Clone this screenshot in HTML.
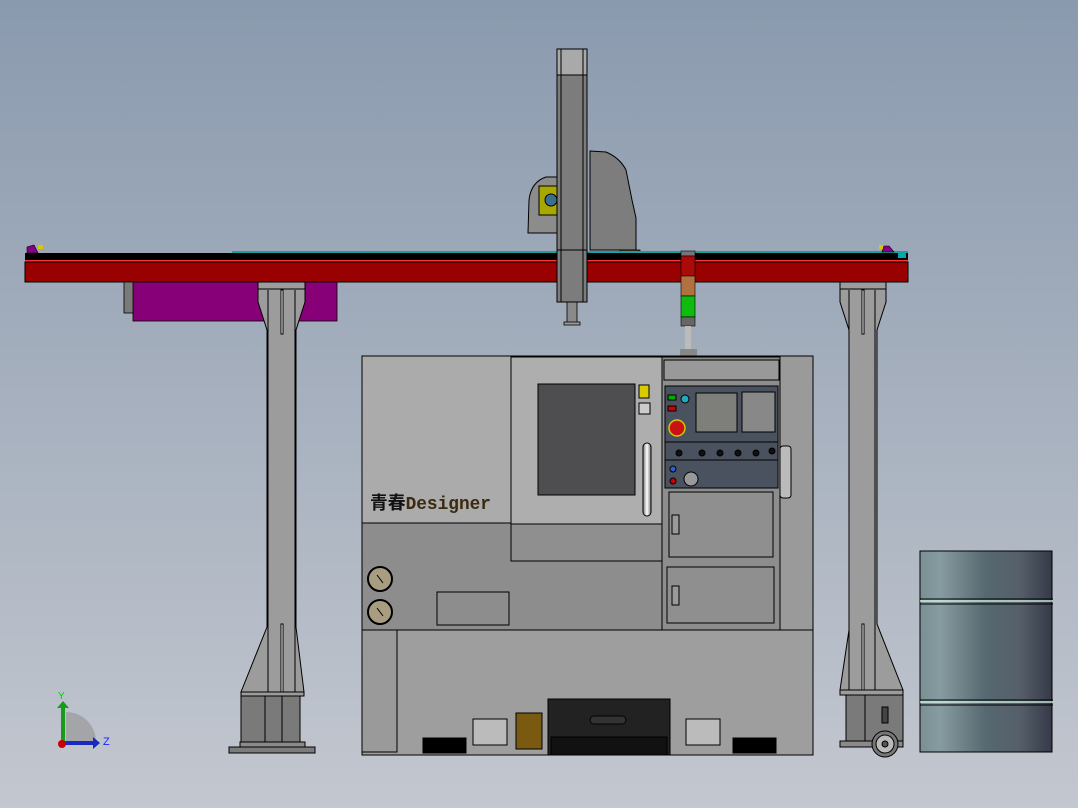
<!DOCTYPE html>
<html><head><meta charset="utf-8"><style>
html,body{margin:0;padding:0;width:1078px;height:808px;overflow:hidden}
svg{display:block}
</style></head><body>
<svg width="1078" height="808" viewBox="0 0 1078 808" xmlns="http://www.w3.org/2000/svg">
<defs>
<linearGradient id="bg" x1="0" y1="0" x2="0" y2="1"><stop offset="0" stop-color="#8a9aae"/><stop offset="1" stop-color="#c3c7cf"/></linearGradient>
<linearGradient id="barrel" x1="0" y1="0" x2="1" y2="0"><stop offset="0" stop-color="#7a8f93"/><stop offset="0.15" stop-color="#879ca0"/><stop offset="0.5" stop-color="#566870"/><stop offset="0.75" stop-color="#555f6a"/><stop offset="1" stop-color="#363a48"/></linearGradient>
<linearGradient id="handle" x1="0" y1="0" x2="1" y2="0"><stop offset="0" stop-color="#777"/><stop offset="0.5" stop-color="#fff"/><stop offset="1" stop-color="#777"/></linearGradient>
</defs>
<rect width="1078" height="808" fill="url(#bg)"/>

<rect x="557" y="49" width="30" height="253" fill="#7c7c7c" stroke="#000" stroke-width="1"/>
<rect x="557" y="49" width="30" height="26" fill="#a9a9a9" stroke="#000"/>
<line x1="561" y1="49" x2="561" y2="302" stroke="#000"/>
<line x1="583" y1="49" x2="583" y2="302" stroke="#000"/>
<rect x="567" y="302" width="10" height="21" fill="#8a8a8a" stroke="#000" stroke-width=".8"/>
<rect x="564" y="322" width="16" height="3" fill="#999" stroke="#000" stroke-width=".8"/>

<path d="M590 151 L606 152 Q620 158 626 170 L632 200 L636 218 L636 250 L590 250 Z" fill="#7d7d7d" stroke="#000"/>
<path d="M557 177 L546 177 Q531 182 529 200 L528 233 L557 233 Z" fill="#8c8c8c" stroke="#000"/>
<rect x="539" y="186" width="18" height="29" fill="#a8a800" stroke="#000"/>
<circle cx="551" cy="200" r="6" fill="#3a6f8f" stroke="#000"/>
<rect x="620" y="250" width="20" height="7" fill="#4a3f1f" stroke="#000" stroke-width=".8"/>

<line x1="232" y1="252" x2="908" y2="252" stroke="#1aa0a0" stroke-width="2"/>
<rect x="25" y="253" width="883" height="7" fill="#000"/>
<rect x="25" y="260" width="883" height="2" fill="#ff3030"/>
<rect x="25" y="262" width="883" height="20" fill="#990000" stroke="#000" stroke-width="1"/>
<path d="M27 253 L27 247 L34 245 L38 253 Z" fill="#880088" stroke="#000" stroke-width=".6"/>
<rect x="38" y="245" width="5" height="4" fill="#d8c800"/>
<path d="M882 252 L884 246 L889 246 L894 252 Z" fill="#880088" stroke="#000" stroke-width=".6"/>
<rect x="879" y="245" width="4" height="4" fill="#d8c800"/>
<rect x="898" y="253" width="8" height="5" fill="#0aa"/>
<rect x="557" y="250" width="30" height="52" fill="#7c7c7c" stroke="#000"/>
<line x1="561" y1="250" x2="561" y2="302" stroke="#000"/>
<line x1="583" y1="250" x2="583" y2="302" stroke="#000"/>

<rect x="124" y="282" width="10" height="31" fill="#7a7a7a" stroke="#000" stroke-width=".8"/>
<rect x="133" y="282" width="204" height="39" fill="#880077" stroke="#000" stroke-width=".8"/>

<g stroke="#000" stroke-width="1">
<path d="M258 282 L305 282 L305 302 L296 330 L296 627 L304 692 L241 692 L267 627 L267 330 L258 302 Z" fill="#9c9c9c"/>
<line x1="268" y1="290" x2="268" y2="692"/><line x1="295" y1="290" x2="295" y2="692"/>
<line x1="258" y1="289" x2="305" y2="289"/>
<rect x="281" y="290" width="2" height="44" fill="#fff"/>
<rect x="281" y="624" width="2" height="68" fill="#fff"/>
<rect x="241" y="692" width="63" height="4" fill="#9c9c9c"/>
<rect x="241" y="696" width="59" height="46" fill="#7a7a7a"/>
<line x1="265" y1="696" x2="265" y2="742"/><line x1="282" y1="696" x2="282" y2="742"/>
<rect x="240" y="742" width="65" height="5" fill="#8a8a8a"/>
<rect x="229" y="747" width="86" height="6" fill="#7c7c7c"/>
</g>

<g stroke="#000" stroke-width="1">
<path d="M840 282 L886 282 L886 302 L877 330 L877 624 L903 690 L840 690 L849 630 L849 330 L840 302 Z" fill="#9c9c9c"/>
<line x1="849" y1="290" x2="849" y2="692"/><line x1="875" y1="290" x2="875" y2="692"/>
<line x1="840" y1="289" x2="886" y2="289"/>
<rect x="862" y="290" width="2" height="44" fill="#fff"/>
<rect x="862" y="624" width="2" height="68" fill="#fff"/>
<rect x="840" y="690" width="63" height="5" fill="#9c9c9c"/>
<rect x="846" y="695" width="57" height="50" fill="#7a7a7a"/>
<line x1="865" y1="695" x2="865" y2="745"/>
<rect x="840" y="741" width="63" height="6" fill="#8a8a8a"/>
<circle cx="885" cy="744" r="13" fill="#777"/>
<circle cx="885" cy="744" r="9" fill="#bbb"/>
<circle cx="885" cy="744" r="3" fill="#555"/>
<rect x="882" y="707" width="6" height="16" fill="#444"/>
</g>

<rect x="920" y="551" width="132" height="201" fill="url(#barrel)" stroke="#000"/>
<line x1="920" y1="599" x2="1053" y2="599" stroke="#000"/><line x1="920" y1="601" x2="1053" y2="601" stroke="#dfe" stroke-width="1.2"/><line x1="920" y1="604" x2="1053" y2="604" stroke="#000"/>
<line x1="920" y1="700" x2="1053" y2="700" stroke="#000"/><line x1="920" y1="702" x2="1053" y2="702" stroke="#dfe" stroke-width="1.2"/><line x1="920" y1="705" x2="1053" y2="705" stroke="#000"/>

<rect x="681" y="251" width="14" height="5" fill="#777" stroke="#000" stroke-width=".6"/>
<rect x="681" y="256" width="14" height="20" fill="#aa0a0a" stroke="#000" stroke-width=".6"/>
<rect x="681" y="276" width="14" height="20" fill="#b07040" stroke="#000" stroke-width=".6"/>
<rect x="681" y="296" width="14" height="21" fill="#10bb10" stroke="#000" stroke-width=".6"/>
<rect x="681" y="317" width="14" height="9" fill="#666" stroke="#000" stroke-width=".6"/>
<rect x="685" y="326" width="6" height="24" fill="#bbb"/>
<rect x="680" y="349" width="17" height="7" fill="#888"/>

<g stroke="#000" stroke-width="1">
<rect x="362" y="356" width="451" height="274" fill="#8d8d8d"/>
<rect x="362" y="356" width="149" height="167" fill="#ababab"/>
<rect x="511" y="357" width="151" height="204" fill="#8f8f8f"/>
<rect x="511" y="357" width="151" height="167" fill="#aeaeae"/>
<rect x="538" y="384" width="97" height="111" fill="#4e4e50"/>
<rect x="639" y="385" width="10" height="13" fill="#d8cc00"/>
<rect x="639" y="403" width="11" height="11" fill="#ccc"/>
<rect x="643" y="443" width="8" height="73" rx="4" fill="url(#handle)"/>
<rect x="662" y="357" width="118" height="273" fill="#8d8d8d"/>
<rect x="664" y="360" width="115" height="20" fill="#999"/>
<rect x="665" y="386" width="113" height="102" fill="#4a5260"/>
<rect x="696" y="393" width="41" height="39" fill="#7e7e7a"/>
<rect x="742" y="392" width="33" height="40" fill="#888"/>
<line x1="665" y1="442" x2="778" y2="442"/><line x1="665" y1="460" x2="778" y2="460"/>
<circle cx="677" cy="428" r="8" fill="#cc1111" stroke="#cc0" stroke-width="1.5"/>
<rect x="668" y="395" width="8" height="5" fill="#0a0"/>
<rect x="668" y="406" width="8" height="5" fill="#c00"/>
<circle cx="685" cy="399" r="4" fill="#2ab"/>
<circle cx="673" cy="469" r="3" fill="#26c"/>
<circle cx="673" cy="481" r="3" fill="#c00"/>
<circle cx="691" cy="479" r="7" fill="#999"/>
<circle cx="679" cy="453" r="3" fill="#111"/><circle cx="702" cy="453" r="3" fill="#111"/><circle cx="720" cy="453" r="3" fill="#111"/><circle cx="738" cy="453" r="3" fill="#111"/><circle cx="756" cy="453" r="3" fill="#111"/><circle cx="772" cy="451" r="3" fill="#111"/>
<rect x="669" y="492" width="104" height="65" fill="#8f8f8f"/>
<rect x="672" y="515" width="7" height="19" fill="#999"/>
<rect x="667" y="567" width="107" height="56" fill="#8f8f8f"/>
<rect x="672" y="586" width="7" height="19" fill="#999"/>
<rect x="780" y="356" width="33" height="274" fill="#9a9a9a"/>
<rect x="780" y="446" width="11" height="52" rx="3" fill="#bbb"/>
<rect x="362" y="630" width="451" height="125" fill="#9e9e9e"/>
<rect x="362" y="630" width="35" height="122" fill="#9a9a9a"/>
<rect x="437" y="592" width="72" height="33" fill="#8d8d8d"/>
<circle cx="380" cy="579" r="12" fill="#a89d80" stroke-width="2"/>
<circle cx="380" cy="612" r="12" fill="#a89d80" stroke-width="2"/>
<line x1="377" y1="575" x2="383" y2="583"/><line x1="377" y1="608" x2="383" y2="616"/>
<rect x="548" y="699" width="122" height="56" fill="#222"/>
<rect x="551" y="737" width="116" height="18" fill="#111"/>
<rect x="590" y="716" width="36" height="8" rx="4" fill="#333"/>
<rect x="473" y="719" width="34" height="26" fill="#bbb"/>
<rect x="686" y="719" width="34" height="26" fill="#bbb"/>
<rect x="516" y="713" width="26" height="36" fill="#7a5a10"/>
<rect x="423" y="738" width="43" height="15" fill="#000"/>
<rect x="733" y="738" width="43" height="15" fill="#000"/>
</g>
<text x="370" y="509" font-family="'Liberation Mono','Noto Sans CJK SC',monospace" font-size="18" font-weight="bold" fill="#111" textLength="121" lengthAdjust="spacingAndGlyphs">青春<tspan fill="#3a2a10">Designer</tspan></text>

<path d="M66 712 A30 30 0 0 1 96 742 L66 742 Z" fill="#999" opacity=".7"/>
<rect x="61" y="706" width="4" height="38" fill="#1a9a1a"/>
<path d="M57 708 L63 701 L69 708 Z" fill="#1a9a1a"/>
<rect x="64" y="741" width="30" height="4" fill="#1a2ac0"/>
<path d="M93 737 L100 743 L93 749 Z" fill="#1a2ac0"/>
<circle cx="62" cy="744" r="4" fill="#c00"/>
<text x="58" y="699" font-family="'Liberation Sans',sans-serif" font-size="10" fill="#0c0">Y</text>
<text x="103" y="745" font-family="'Liberation Sans',sans-serif" font-size="11" fill="#22f">Z</text>
</svg>
</body></html>
